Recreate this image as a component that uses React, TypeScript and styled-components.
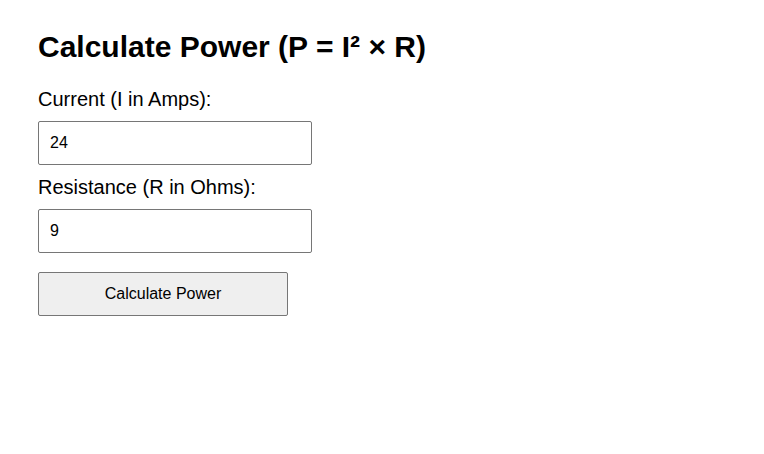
import React, { useState } from "react";
import styled, { createGlobalStyle } from "styled-components";

const Global = createGlobalStyle`
  html, body { margin: 0; padding: 0; background: #fff; }
  body { font-family: "Liberation Sans", Arial, sans-serif; color: #000; }
`;

const Page = styled.div`
  padding: 8px 38px;
  display: flex;
  flex-direction: column;
  align-items: flex-start;
`;

const Title = styled.h1`
  font-size: 30px;
  font-weight: bold;
  margin: 22px 0 24px;
`;

const Label = styled.label`
  font-size: 20px;
  display: block;
  margin: 0 0 10px;
`;

const Input = styled.input`
  box-sizing: border-box;
  width: 274px;
  height: 44px;
  padding: 0 11px;
  font-family: "Liberation Sans", Arial, sans-serif;
  font-size: 16px;
  border: 1px solid #767676;
  border-radius: 2px;
  margin: 0 0 11px;
`;

const Button = styled.button`
  box-sizing: border-box;
  width: 250px;
  height: 44px;
  margin-top: 8px;
  font-family: "Liberation Sans", Arial, sans-serif;
  font-size: 16px;
  background: #efefef;
  border: 1px solid #767676;
  border-radius: 2px;
  color: #000;
`;

export default function App() {
  const [i, setI] = useState("24");
  const [r, setR] = useState("9");
  return (
    <Page>
      <Global />
      <Title>Calculate Power (P = I² × R)</Title>
      <Label>Current (I in Amps):</Label>
      <Input value={i} onChange={(e) => setI(e.target.value)} />
      <Label>Resistance (R in Ohms):</Label>
      <Input value={r} onChange={(e) => setR(e.target.value)} />
      <Button>Calculate Power</Button>
    </Page>
  );
}
